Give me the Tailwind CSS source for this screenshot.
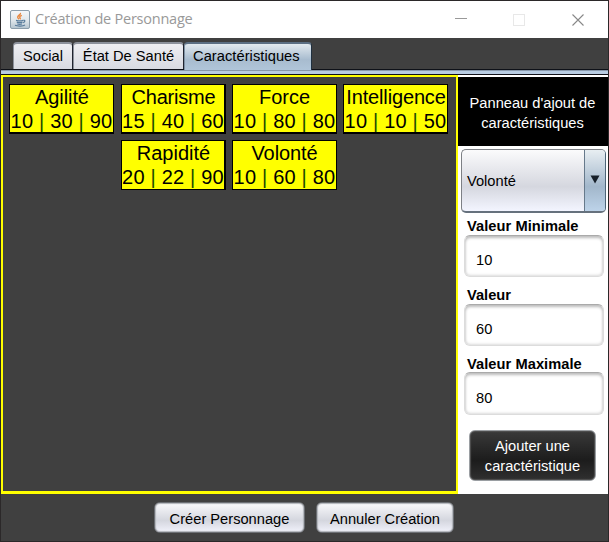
<!DOCTYPE html>
<html lang="fr">
<head>
<meta charset="utf-8">
<title>Création de Personnage</title>
<script src="https://cdn.jsdelivr.net/npm/@tailwindcss/browser@4"></script>
</head>
<body class="overflow-hidden">
<div class="w-[609px] h-[542px] border border-[#2b2829] bg-[#404040] flex flex-col font-['Liberation_Sans',Arial,sans-serif] text-[14.67px] text-black whitespace-nowrap">
  <header class="h-[37px] shrink-0 bg-white flex items-center">
    <svg class="ml-[9px] -mt-[1px] shrink-0" width="20" height="19" viewBox="0 0 20 19" fill="none">
      <defs><linearGradient id="j" x1="0" y1="0" x2="0" y2="1"><stop stop-color="#f5f7f9"/><stop offset=".55" stop-color="#dfe6eb"/><stop offset="1" stop-color="#b4c4cf"/></linearGradient></defs>
      <rect x=".5" y=".5" width="19" height="18" rx="1.5" fill="url(#j)" stroke="#8b9dab"/>
      <path d="M10.2 3c1.2 1.4-3 2.700-2.500 4.400.2.9 1.300 1.700 1.300 1.700M11.800 5.300c-2.200 1-2.500 1.600-1.800 2.500.6.9-.1 1.400-.1 1.400" stroke="#e8873f" stroke-width="1.400"/>
      <path d="M6 10.400c2.200.6 5.400.6 7 0M6.800 12.300c2 .5 4 .5 5.700 0M7.300 14c1.500.4 3.300.4 4.700 0M13.200 10.300c2.200-.4 2.200 1.600 0 2.400M5 15.300c2.500 1.100 8 1 10-.2" stroke="#587b9b" stroke-width="1.200"/>
    </svg>
    <h1 class="ml-[5px] w-[160px] -mt-[1px] font-['Open_Sans','Noto_Sans',sans-serif] text-[14.5px] tracking-[-0.23px] text-[#999]">Création de Personnage</h1>
    <svg class="ml-auto mr-[22px]" width="131" height="14" viewBox="0 0 131 14" fill="none">
      <path d="M0 5.500h12" stroke="#999"/>
      <rect x="58.500" y="1.500" width="11" height="11" stroke="#e8e8e8"/>
      <path d="M117.500 1.500l11 11m0-11l-11 11" stroke="#888" stroke-width="1.100"/>
    </svg>
  </header>

  <nav class="h-[31px] shrink-0 pl-[12px] pt-[4px] flex">
    <div class="w-[60px] h-[27px] rounded-t-[4px] border-t-2 border-x border-[#8c919b] border-r-[#20242f] bg-linear-to-b from-[#eeeef2] to-[#d8dae1] text-center leading-[25px]">Social</div>
    <div class="w-[111px] h-[27px] rounded-t-[4px] border-t-2 border-x border-[#8c919b] border-r-[#20242f] bg-linear-to-b from-[#eeeef2] to-[#d8dae1] text-center leading-[25px]">État De Santé</div>
    <div class="w-[128px] h-[28px] relative z-10 rounded-t-[4px] border-t-2 border-x border-t-[#5c6f83] border-l-[#7e91a4] border-r-[#20303f] bg-linear-to-b from-[#e3eaef] via-[#a8bccf] via-60% to-[#b0c5d9] pl-[8px] leading-[25px] tracking-[0.05px]">Caractéristiques</div>
  </nav>
  <div class="h-[6px] shrink-0 border-y border-[#0e1118] border-b-[#101018] bg-linear-to-b from-[#8797aa] from-25% to-[#b8cce2] to-25%"></div>

  <main class="h-[419px] shrink-0 flex">
    <section class="w-[457px] border-2 border-b-3 border-[#ff0] pt-[7px] pl-[6px] flex flex-col gap-[6px] text-[20px] leading-[24px] text-center">
      <div class="flex gap-[6px]">
        <div class="w-[105px] h-[50px] mr-[1px] border border-b-2 border-black bg-[#ff0]"><div class="pl-px tracking-[-0.1px]">Agilité</div><div class="-mx-2 tracking-[0.2px]">10 <span class="text-[#1c4a00]">|</span> 30 <span class="text-[#1c4a00]">|</span> 90</div></div>
        <div class="w-[105px] h-[50px] border border-b-2 border-r-2 border-black bg-[#ff0]"><div class="pl-px tracking-[-0.2px]">Charisme</div><div class="-mx-2 tracking-[0.2px]">15 <span class="text-[#1c4a00]">|</span> 40 <span class="text-[#1c4a00]">|</span> 60</div></div>
        <div class="w-[105px] h-[50px] border border-b-2 border-black bg-[#ff0]"><div>Force</div><div class="-mx-2 tracking-[0.2px]">10 <span class="text-[#1c4a00]">|</span> 80 <span class="text-[#1c4a00]">|</span> 80</div></div>
        <div class="w-[105px] h-[50px] border border-b-2 border-black bg-[#ff0]"><div class="pl-px tracking-[-0.15px]">Intelligence</div><div class="-mx-2 tracking-[0.2px]">10 <span class="text-[#1c4a00]">|</span> 10 <span class="text-[#1c4a00]">|</span> 50</div></div>
      </div>
      <div class="flex gap-[6px] pl-[112px]">
        <div class="w-[105px] h-[50px] border border-r-2 border-black bg-[#ff0]"><div class="pl-px">Rapidité</div><div class="-mx-2 tracking-[0.2px]">20 <span class="text-[#1c4a00]">|</span> 22 <span class="text-[#1c4a00]">|</span> 90</div></div>
        <div class="w-[105px] h-[50px] border border-black bg-[#ff0]"><div class="tracking-[-0.1px]">Volonté</div><div class="-mx-2 tracking-[0.2px]">10 <span class="text-[#1c4a00]">|</span> 60 <span class="text-[#1c4a00]">|</span> 80</div></div>
      </div>
    </section>
    <aside class="w-[150px] bg-white pt-[2px] flex flex-col">
      <div class="h-[69px] shrink-0 bg-black text-white text-center leading-[20px] pt-[16px] pr-px">Panneau d'ajout de<br>caractéristiques</div>
      <div class="mt-[3px] ml-[3px] w-[145px] h-[64px] shrink-0 rounded-[5px] border border-b-2 border-[#7d8085] border-r-[#4e6578] border-b-[#66717d] bg-linear-to-b from-[#fbfbfc] via-[#d5d7df] via-60% to-[#f3f5ff] flex overflow-hidden">
        <span class="flex-1 pl-[5px] leading-[63px]">Volonté</span>
        <span class="w-[21px] border-l border-[#66798b] bg-linear-to-b from-[#e8eef2] via-[#a2b7cb] via-60% to-[#bdd3e9] flex justify-center pt-[25px]">
          <svg width="10" height="9" viewBox="0 0 10 9"><path d="M.5.5h9L5 8.500z" fill="#17202a"/></svg>
        </span>
      </div>
      <label class="h-[22px] shrink-0 pl-[9px] pt-[2px] leading-[22px] font-bold tracking-[0.05px]">Valeur Minimale</label>
      <div class="ml-[6px] w-[140px] h-[42px] shrink-0 rounded-[6px] border border-[#dcdcdc] border-t-[#aaa] shadow-[inset_0_2px_3px_#bbb,inset_0_-1px_3px_#ddd] pl-[11px] leading-[49px]">10</div>
      <label class="h-[27px] shrink-0 pl-[9px] pt-[7px] leading-[22px] font-bold">Valeur</label>
      <div class="ml-[6px] w-[140px] h-[42px] shrink-0 rounded-[6px] border border-[#dcdcdc] border-t-[#aaa] shadow-[inset_0_2px_3px_#bbb,inset_0_-1px_3px_#ddd] pl-[11px] leading-[49px]">60</div>
      <label class="h-[26px] shrink-0 pl-[9px] pt-[7px] leading-[22px] font-bold tracking-[0.05px]">Valeur Maximale</label>
      <div class="ml-[6px] w-[140px] h-[43px] shrink-0 rounded-[6px] border border-[#dcdcdc] border-t-[#aaa] shadow-[inset_0_2px_3px_#bbb,inset_0_-1px_3px_#ddd] pl-[11px] leading-[51px]">80</div>
      <button class="mt-[15px] ml-[11px] w-[127px] h-[51px] shrink-0 rounded-[6px] border border-[#9a9ea2] shadow-[inset_0_0_1px_1px_#505050] bg-linear-to-b from-[#3a3a3a] via-[#1c1c1c] via-60% to-[#303030] text-white leading-[20px]">Ajouter une<br>caractéristique</button>
    </aside>
  </main>

  <footer class="flex-1 pl-[153px] pt-[8px] flex gap-[11px]">
    <button class="w-[151px] h-[31px] rounded-[6px] border border-[#6b6e73] shadow-[inset_0_0_1px_1px_#b0b3b9] bg-linear-to-b from-[#fafafc] via-[#d4d6de] via-60% to-[#f1f2fb] leading-[31px] pt-px">Créer Personnage</button>
    <button class="w-[138px] h-[31px] rounded-[6px] border border-[#6b6e73] shadow-[inset_0_0_1px_1px_#b0b3b9] bg-linear-to-b from-[#fafafc] via-[#d4d6de] via-60% to-[#f1f2fb] leading-[31px] pt-px">Annuler Création</button>
  </footer>
</div>
</body>
</html>
